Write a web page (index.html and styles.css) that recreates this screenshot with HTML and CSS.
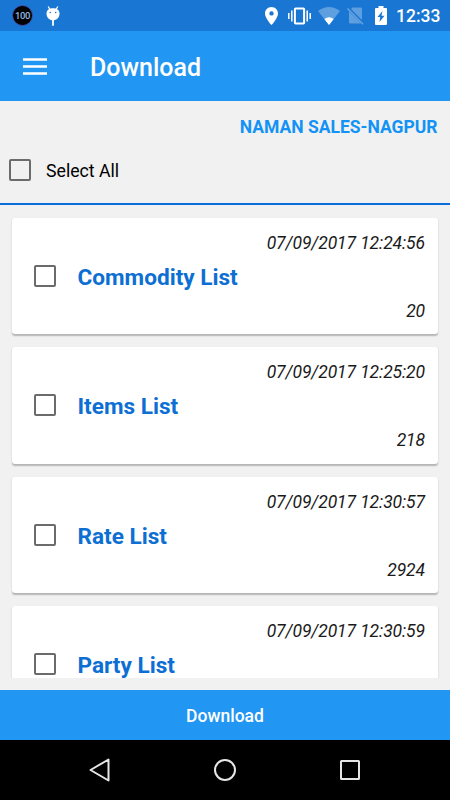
FILE: index.html
```html
<!DOCTYPE html>
<html lang="en">
<head>
    <meta charset="UTF-8">
    <meta name="viewport" content="width=device-width, initial-scale=1.0">
    <title>Download</title>
    <link rel="stylesheet" href="styles.css">
</head>
<body>
    <div class="screen">
        <div class="status-bar">
            <div class="badge">100</div>
            <svg class="icon-debug" width="14" height="20" viewBox="0 0 14 20">
                <path d="M2.2 .5 L4 3.5 M11.8 .5 L10 3.5" stroke="#fff" stroke-width="1.3"/>
                <path d="M.5 7.500 C.5 4.200 3.300 2.300 7 2.300 S13.500 4.200 13.500 7.500 C13.500 11.500 10.500 14.300 7 14.300 S.5 11.500 .5 7.500 Z" fill="#fff"/>
                <path d="M7 14 V19.700" stroke="#fff" stroke-width="1.800"/>
                <circle cx="4.300" cy="6.500" r=".8" fill="#1976d2"/>
                <circle cx="9.700" cy="6.500" r=".8" fill="#1976d2"/>
            </svg>
            <div class="status-icons">
                <svg width="13" height="18" viewBox="0 0 13 18">
                    <path d="M6.500 0 C2.900 0 0 2.900 0 6.400 C0 11.200 6.500 18 6.500 18 S13 11.200 13 6.400 C13 2.900 10.100 0 6.500 0 Z M6.500 4.200 A2.200 2.200 0 1 1 6.500 8.600 A2.200 2.200 0 1 1 6.500 4.200 Z" fill="#fff" fill-rule="evenodd"/>
                </svg>
                <svg class="icon-vibrate" width="23" height="18" viewBox="0 0 23 18">
                    <rect x="6.900" y="1.400" width="9.200" height="15" rx=".7" fill="none" stroke="#fff" stroke-width="2"/>
                    <path d="M3.800 3.500 V14.500 M.8 6 V12 M19.200 3.500 V14.500 M22.200 6 V12" stroke="#fff" stroke-width="1.500"/>
                </svg>
                <svg class="icon-wifi" width="22" height="18" viewBox="0 0 22 18">
                    <path d="M0 4 Q11 -4 22 4 L11 18 Z" fill="#fff" fill-opacity=".3"/>
                    <path d="M6.300 12 Q11 8.500 15.700 12 L11 18 Z" fill="#fff"/>
                </svg>
                <svg class="icon-sim" width="17" height="18" viewBox="0 0 17 18">
                    <path d="M5.500 .5 H14 Q15 .5 15 1.500 V13 L4 2 Z M2 4.500 L14 16.500 H3 Q2 16.500 2 15.500 Z" fill="#fff" fill-opacity=".3"/>
                    <path d="M.5 1.500 L16 17.300" stroke="#fff" stroke-opacity=".35" stroke-width="1.300"/>
                </svg>
                <svg class="icon-battery" width="12" height="19" viewBox="0 0 12 19">
                    <path d="M1 2 H3.500 V0 H8.500 V2 H11 Q12 2 12 3 V18 Q12 19 11 19 H1 Q0 19 0 18 V3 Q0 2 1 2 Z M7.500 5 L2.500 11 H5.200 L4.500 16 L9.500 9.700 H6.500 Z" fill="#fff" fill-rule="evenodd"/>
                </svg>
            </div>
            <span class="clock">12:33</span>
        </div>

        <div class="toolbar">
            <svg width="24" height="17" viewBox="0 0 24 17">
                <path d="M0 1.500 H24 M0 8.500 H24 M0 15.500 H24" stroke="#fff" stroke-width="2.600"/>
            </svg>
            <h1>Download</h1>
        </div>

        <div class="header">
            <div class="company">NAMAN SALES-NAGPUR</div>
            <div class="select-all">
                <span class="checkbox"></span>
                <span>Select All</span>
            </div>
        </div>

        <div class="list">
            <div class="card">
                <div class="timestamp">07/09/2017 12:24:56</div>
                <div class="card-title">
                    <span class="checkbox"></span>
                    <h2>Commodity List</h2>
                </div>
                <div class="count">20</div>
            </div>
            <div class="card">
                <div class="timestamp">07/09/2017 12:25:20</div>
                <div class="card-title">
                    <span class="checkbox"></span>
                    <h2>Items List</h2>
                </div>
                <div class="count">218</div>
            </div>
            <div class="card">
                <div class="timestamp">07/09/2017 12:30:57</div>
                <div class="card-title">
                    <span class="checkbox"></span>
                    <h2>Rate List</h2>
                </div>
                <div class="count">2924</div>
            </div>
            <div class="card">
                <div class="timestamp">07/09/2017 12:30:59</div>
                <div class="card-title">
                    <span class="checkbox"></span>
                    <h2>Party List</h2>
                </div>
            </div>
        </div>

        <button class="btn-download">Download</button>

        <div class="nav-bar">
            <svg width="22" height="24" viewBox="0 0 22 24">
                <path d="M19.500 1.500 V22.500 L1.500 12 Z" fill="none" stroke="#e6e6e6" stroke-width="2" stroke-linejoin="round"/>
            </svg>
            <svg width="22" height="22" viewBox="0 0 22 22">
                <circle cx="11" cy="11" r="10" fill="none" stroke="#e6e6e6" stroke-width="2"/>
            </svg>
            <svg width="20" height="20" viewBox="0 0 20 20">
                <rect x="1" y="1" width="18" height="18" rx=".5" fill="none" stroke="#e6e6e6" stroke-width="2"/>
            </svg>
        </div>
    </div>
</body>
</html>
```
FILE: styles.css
```css
* {
    margin: 0;
    padding: 0;
    box-sizing: border-box;
}

body {
    font-family: Roboto, sans-serif;
    background: #f1f1f1;
    color: #000;
}

.screen {
    width: 450px;
    height: 800px;
    display: flex;
    flex-direction: column;
    overflow: hidden;
}

.status-bar {
    height: 31px;
    flex-shrink: 0;
    background: #1976d2;
    color: white;
    display: flex;
    align-items: center;
    padding: 0 10px 0 12px;
}

.badge {
    width: 21px;
    height: 21px;
    border: 1px solid #3f51b5;
    border-radius: 50%;
    background: #000;
    color: #90b4e0;
    font-size: 9.5px;
    font-weight: 500;
    line-height: 19px;
    text-align: center;
    letter-spacing: -0.4px;
}

.icon-debug {
    margin-left: 12.5px;
}

.status-icons {
    display: flex;
    align-items: center;
    margin-left: auto;
}

.icon-vibrate {
    margin-left: 10px;
}

.icon-wifi {
    margin-left: 7px;
}

.icon-sim {
    margin-left: 7px;
}

.icon-battery {
    margin-left: 11px;
}

.clock {
    width: 44px;
    margin-left: 9px;
    font-size: 17.5px;
    font-weight: 500;
    white-space: nowrap;
}

.toolbar {
    height: 70px;
    flex-shrink: 0;
    background: #2196f3;
    color: white;
    display: flex;
    align-items: center;
    gap: 43px;
    padding: 0 23px;
}

.toolbar h1 {
    font-size: 25px;
    font-weight: 500;
    line-height: 30px;
    padding-top: 3px;
}

.header {
    height: 104px;
    flex-shrink: 0;
    border-bottom: 2px solid #0a6fd6;
    padding: 14px 12.5px 0 9px;
}

.company {
    color: #1293f5;
    font-size: 17.5px;
    font-weight: 700;
    line-height: 24px;
    text-align: right;
}

.select-all {
    display: flex;
    align-items: center;
    gap: 15px;
    margin-top: 20px;
    font-size: 17.7px;
    line-height: 24px;
}

.select-all .checkbox {
    margin-bottom: 2px;
}

.checkbox {
    width: 22px;
    height: 22px;
    flex-shrink: 0;
    border: 2px solid #6b6b6b;
    border-radius: 2px;
}

.list {
    height: 472.5px;
    flex-shrink: 0;
    padding: 12.5px 12px 0;
    overflow: hidden;
}

.card {
    height: 116.5px;
    margin-bottom: 13px;
    padding: 14px 13px 0 22px;
    background: white;
    border-radius: 3px;
    box-shadow: 0 1.5px 1.5px rgba(0, 0, 0, 0.25);
}

.timestamp,
.count {
    font-size: 17.5px;
    font-style: italic;
    line-height: 22px;
    text-align: right;
    letter-spacing: -0.1px;
    color: #1a1a1a;
}

.card-title {
    height: 46px;
    display: flex;
    align-items: center;
    gap: 21.5px;
}

.card-title .checkbox {
    margin-bottom: 2px;
}

.card-title h2 {
    color: #0d6fd3;
    font-size: 22.6px;
    font-weight: 700;
    line-height: 28px;
    padding-top: 2px;
}

.btn-download {
    height: 50px;
    flex-shrink: 0;
    margin-top: 12.5px;
    padding-top: 2px;
    border: none;
    background: #2196f3;
    color: white;
    font-family: inherit;
    font-size: 17.5px;
    font-weight: 500;
}

.nav-bar {
    height: 60px;
    flex-shrink: 0;
    background: #000;
    display: flex;
    align-items: center;
    justify-content: space-between;
    padding: 0 90px 0 89px;
}

.nav-bar svg:nth-child(2) {
    margin-right: 2px;
}
```
